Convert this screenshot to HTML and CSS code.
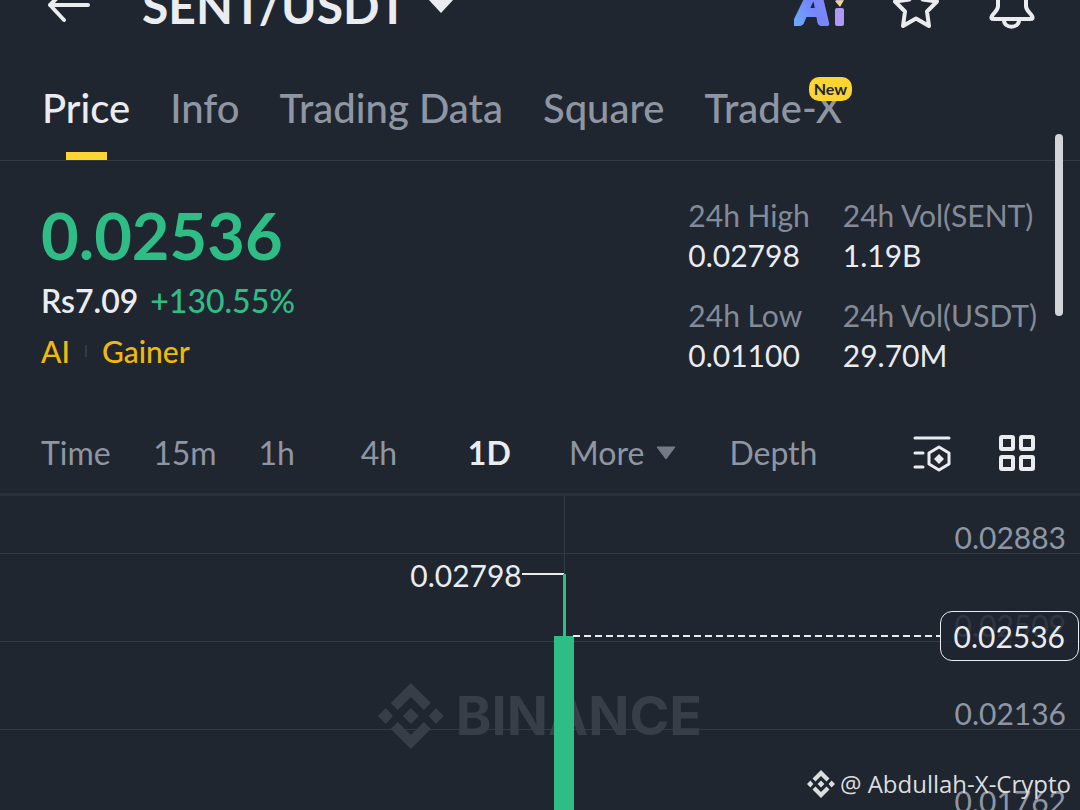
FILE: index.html
```html
<!DOCTYPE html>
<html lang="en">
<head>
    <meta charset="UTF-8">
    <meta name="viewport" content="width=device-width, initial-scale=1.0">
    <title>SENT/USDT</title>
    <link rel="stylesheet" href="styles.css">
</head>
<body>
    <div class="app">
        <header class="header">
            <button class="icon-btn" aria-label="Back">
                <svg width="48" height="48" viewBox="0 0 48 48" fill="none" stroke="#eaecef" stroke-width="4" stroke-linecap="round" stroke-linejoin="round">
                    <path d="M44 23H6M20 9L6 23l14 15"/>
                </svg>
            </button>
            <button class="pair">SENT/USDT
                <svg width="28" height="16" viewBox="0 0 28 16"><path d="M1 1h26L14 15z" fill="#eaecef"/></svg>
            </button>
            <div class="header-actions">
                <button class="icon-btn" aria-label="Ai">
                    <svg width="50" height="48" viewBox="0 0 50 48">
                        <defs>
                            <linearGradient id="ai" x1="0" y1="1" x2="1" y2="0">
                                <stop offset="0" stop-color="#65b5ff"/>
                                <stop offset="0.5" stop-color="#7586fb"/>
                                <stop offset="1" stop-color="#8f88f8"/>
                            </linearGradient>
                        </defs>
                        <text class="ai-letter" x="2" y="42" fill="url(#ai)" stroke="url(#ai)" stroke-width="4" stroke-linejoin="round">A</text>
                        <rect x="41" y="26" width="9" height="18" rx="2" fill="#b197f6"/>
                        <path d="M45 9l5 6-3 5-5-1-2-4z" fill="#b197f6"/>
                        <path d="M41 19l9-1-4 7z" fill="#f0d98a"/>
                    </svg>
                </button>
                <button class="icon-btn" aria-label="Add to favorites">
                    <svg width="48" height="48" viewBox="0 0 48 48" fill="none" stroke="#eaecef" stroke-width="4" stroke-linejoin="round">
                        <path d="M24 4l6.500 13.500L45 19.500 35 29.500 37 44 24 36.500 11 44 13 29.500 3 19.500 17.500 17.500z"/>
                    </svg>
                </button>
                <button class="icon-btn" aria-label="Price alerts">
                    <svg width="48" height="48" viewBox="0 0 48 48" fill="none" stroke="#eaecef" stroke-width="4" stroke-linejoin="round">
                        <path d="M24 4C14 4 10 11 10 19v5c0 5-4 6-6 10-1 2-1 3 2 3h36c3 0 3-1 2-3-2-4-6-5-6-10v-5C38 11 34 4 24 4z"/>
                        <path d="M16 38c0 9 15 9 15 0"/>
                    </svg>
                </button>
            </div>
        </header>

        <nav class="tabs">
            <a class="tab active" href="#">Price</a>
            <a class="tab" href="#">Info</a>
            <a class="tab" href="#">Trading Data</a>
            <a class="tab" href="#">Square</a>
            <a class="tab" href="#">Trade-X<span class="badge">New</span></a>
        </nav>

        <section class="summary">
            <div class="quote">
                <div class="last-price">0.02536</div>
                <div class="change"><span class="fiat">Rs7.09</span><span class="percent">+130.55%</span></div>
                <div class="tags"><a href="#">AI</a><span class="divider"></span><a href="#">Gainer</a></div>
            </div>
            <dl class="stats">
                <div><dt>24h High</dt><dd>0.02798</dd></div>
                <div><dt>24h Vol(SENT)</dt><dd>1.19B</dd></div>
                <div><dt>24h Low</dt><dd>0.01100</dd></div>
                <div><dt>24h Vol(USDT)</dt><dd>29.70M</dd></div>
            </dl>
        </section>

        <div class="intervals">
            <button>Time</button>
            <button>15m</button>
            <button>1h</button>
            <button>4h</button>
            <button class="selected">1D</button>
            <button>More
                <svg width="20" height="14" viewBox="0 0 20 14"><path d="M1 1h18L10 13z" fill="#747a86" stroke="#747a86" stroke-linejoin="round"/></svg>
            </button>
            <button>Depth</button>
            <button aria-label="Indicators">
                <svg width="40" height="40" viewBox="0 0 40 40" fill="none" stroke="#eaecef" stroke-width="3" stroke-linecap="round" stroke-linejoin="round">
                    <path d="M3 5h34M3 20h8M3 34h8"/>
                    <path d="M27 14l10 6v11l-10 6-10-6V20z"/>
                    <path d="M27 21l5 5-5 5-5-5z" fill="#eaecef" stroke="none"/>
                </svg>
            </button>
            <button aria-label="Layout">
                <svg width="40" height="40" viewBox="0 0 40 40" fill="none" stroke="#eaecef" stroke-width="4">
                    <rect x="3" y="4" width="12" height="12" rx="1"/>
                    <rect x="23" y="4" width="12" height="12" rx="1"/>
                    <rect x="3" y="24" width="12" height="12" rx="1"/>
                    <rect x="23" y="24" width="12" height="12" rx="1"/>
                </svg>
            </button>
        </div>

        <main class="chart">
            <div class="row first">0.02883</div>
            <div class="row">0.02509</div>
            <div class="row">0.02136</div>
            <div class="row">0.01762</div>

            <div class="grid-line"></div>
            <div class="watermark">
                <svg width="66" height="66" viewBox="0 0 66 66" fill="currentColor">
                    <path d="M33 0l20 20-7 7-13-13-13 13-7-7zM33 66l20-20-7-7-13 13-13-13-7 7zM33 25l8 8-8 8-8-8zM8 25l7 8-7 8-8-8zM58 25l8 8-8 8-7-8z"/>
                </svg>
                <span>BINANCE</span>
            </div>
            <div class="high-mark">0.02798</div>
            <div class="candle"></div>
            <div class="price-line">
                <svg width="100%" height="2"><line x1="0" y1="1" x2="100%" y2="1" stroke="#eaecef" stroke-width="2" stroke-dasharray="7 4"/></svg>
            </div>
            <div class="price-tag">0.02536</div>
        </main>

        <div class="scroll-thumb"></div>
        <div class="credit">
            <svg width="28" height="28" viewBox="0 0 66 66" fill="currentColor">
                <path d="M33 0l20 20-7 7-13-13-13 13-7-7zM33 66l20-20-7-7-13 13-13-13-7 7zM33 25l8 8-8 8-8-8zM8 25l7 8-7 8-8-8zM58 25l8 8-8 8-7-8z"/>
            </svg>
            <span>@ Abdullah-X-Crypto</span>
        </div>
    </div>
</body>
</html>
```

FILE: styles.css
```css
* {
    box-sizing: border-box;
}
body {
    margin: 0;
    background-color: #202630;
    color: #eaecef;
    font-family: Lato, "Liberation Sans", sans-serif;
    font-size: 30px;
    line-height: 40px;
}
button {
    padding: 0;
    border: none;
    background: none;
    color: inherit;
    font: inherit;
    cursor: pointer;
}
a {
    color: inherit;
    text-decoration: none;
}
svg {
    display: block;
}
.app {
    position: relative;
    display: flex;
    flex-direction: column;
    height: 100vh;
    overflow: hidden;
}

/* header is partly scrolled out of view */
.header {
    display: flex;
    flex: none;
    align-items: center;
    height: 60px;
    margin-top: -24px;
    padding: 0 44px;
}
.pair {
    display: flex;
    align-items: center;
    gap: 20px;
    margin-left: 50px;
    font-size: 48px;
    font-weight: bold;
    line-height: 60px;
}
.header-actions {
    display: flex;
    gap: 48px;
    margin-left: auto;
}
.ai-letter {
    font-size: 50px;
    font-style: italic;
    font-weight: 900;
}

.tabs {
    display: flex;
    flex: none;
    gap: 40px;
    height: 125px;
    padding: 44px 42px 0;
    border-bottom: 1px solid #333b47;
    color: #8f96a3;
    font-size: 40px;
    font-weight: 500;
    line-height: 56px;
}
.tab {
    position: relative;
    white-space: nowrap;
}
.tab.active {
    color: #eaecef;
}
.tab.active::after {
    content: "";
    position: absolute;
    bottom: 0;
    left: 50%;
    width: 41px;
    height: 8px;
    margin-left: -20px;
    background-color: #fcd535;
}
.badge {
    position: absolute;
    top: -3px;
    right: -10px;
    padding: 0 5px;
    border-radius: 10px;
    background-color: #fcd535;
    color: #202630;
    font-size: 16px;
    font-weight: bold;
    line-height: 24px;
}

.summary {
    display: flex;
    flex: none;
    justify-content: space-between;
    padding: 34px 43px 0 41px;
}
.last-price {
    color: #2ebd85;
    font-size: 65px;
    font-weight: bold;
    line-height: 80px;
}
.change {
    display: flex;
    gap: 12px;
    margin-top: 6px;
    font-size: 32px;
    font-weight: 500;
}
.fiat {
    font-weight: 600;
}
.percent {
    color: #2ebd85;
}
.tags {
    display: flex;
    align-items: center;
    gap: 15px;
    margin-top: 10px;
    color: #f0b90b;
    font-weight: 500;
}
.divider {
    width: 2px;
    height: 12px;
    background-color: #333b47;
}
.stats {
    display: grid;
    grid-template-columns: auto auto;
    gap: 20px 33px;
    margin: 0;
}
.stats dt {
    color: #848b98;
}
.stats dd {
    margin: 0;
}

.intervals {
    display: grid;
    flex: none;
    grid-template-columns: 112fr 105fr 102fr 107fr 101fr 160fr 182fr 86fr 40fr;
    align-items: center;
    justify-items: start;
    height: 84px;
    margin-top: 37px;
    padding: 0 42px 0 41px;
    border-bottom: 3px solid #29303b;
    color: #8f96a3;
    font-size: 32px;
}
.intervals button {
    display: flex;
    align-items: center;
    gap: 12px;
}
.intervals .selected {
    color: #eaecef;
    font-weight: bold;
}

.chart {
    position: relative;
    flex: 1;
    min-height: 0;
}
.row {
    display: flex;
    align-items: flex-end;
    justify-content: flex-end;
    height: 88px;
    padding-right: 14px;
    border-bottom: 1px solid #333b47;
    color: #8f96a3;
    line-height: 32px;
}
.row.first {
    height: 58px;
}
.grid-line {
    position: absolute;
    top: 0;
    bottom: 0;
    left: 52.2%;
    width: 1px;
    background-color: #333b47;
}
.watermark {
    position: absolute;
    top: 187px;
    left: 50%;
    display: flex;
    align-items: center;
    gap: 12px;
    color: #383e47;
    font-family: Inter, "Liberation Sans", sans-serif;
    font-size: 54px;
    font-weight: bold;
    line-height: 66px;
    transform: translateX(-50%);
}
.high-mark {
    position: absolute;
    top: 59px;
    right: 47.8%;
    display: flex;
}
.high-mark::after {
    content: "";
    width: 42px;
    height: 2px;
    margin-top: 18px;
    background-color: #eaecef;
}
.candle {
    position: absolute;
    top: 140px;
    bottom: 0;
    left: 52.2%;
    width: 20px;
    margin-left: -10px;
    background-color: #2ebd85;
}
.candle::before {
    content: "";
    position: absolute;
    bottom: 100%;
    left: 9px;
    width: 3px;
    height: 62px;
    background-color: #2ebd85;
}
.price-line {
    position: absolute;
    top: 139px;
    left: 53.1%;
    right: 139px;
}
.price-tag {
    position: absolute;
    top: 115px;
    right: 1px;
    padding: 4px 13px;
    border: 1px solid #eaecef;
    border-radius: 12px;
    background-color: rgba(32, 38, 48, 0.85);
    line-height: 40px;
}

.scroll-thumb {
    position: absolute;
    top: 134px;
    right: 17px;
    width: 8px;
    height: 182px;
    border-radius: 4px;
    background-color: #d3d4d8;
}
.credit {
    position: absolute;
    right: 9px;
    bottom: 10px;
    display: flex;
    align-items: center;
    gap: 5px;
    color: #dcdddf;
    font-family: "Open Sans", "Noto Sans", sans-serif;
    font-size: 24px;
    line-height: 32px;
}
```
